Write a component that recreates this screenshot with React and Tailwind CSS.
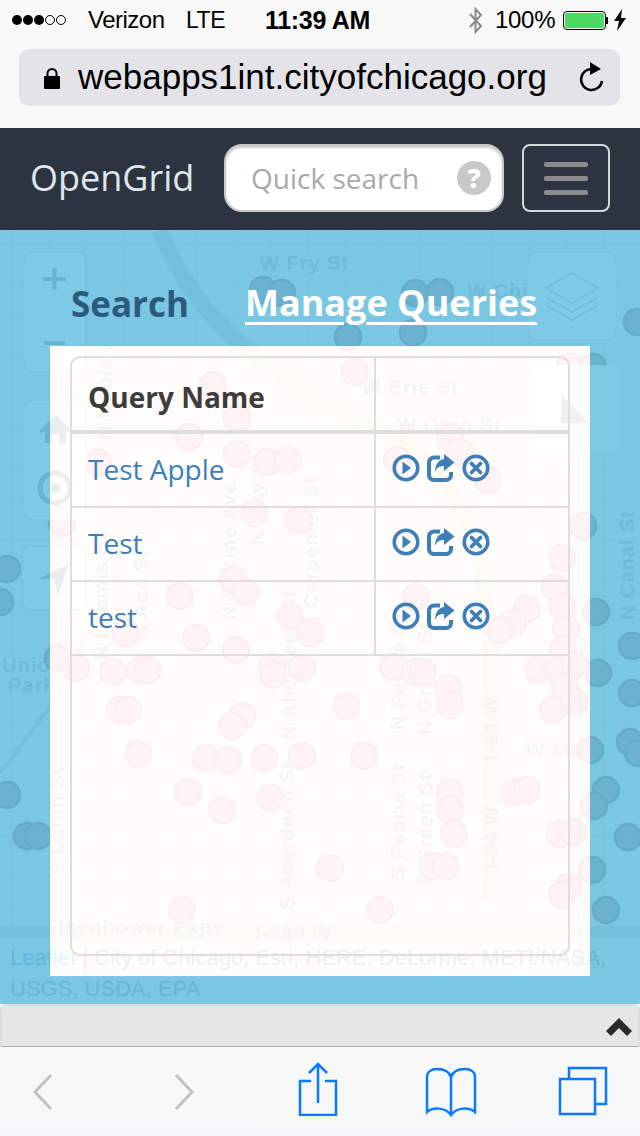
import React from 'react'

const dots = [
  [213, 385], [237, 418], [189, 437], [237, 454], [267, 462], [288, 460], [98, 463], [263, 290], [282, 293],
  [254, 513], [298, 520], [62, 523], [233, 579], [246, 592], [180, 596], [290, 616], [310, 633], [126, 633],
  [196, 638], [236, 650], [58, 658], [76, 668], [113, 672], [140, 670], [148, 670], [272, 667], [273, 675],
  [302, 668], [120, 710], [128, 710], [242, 716], [232, 726], [138, 754], [206, 758], [228, 760], [264, 758],
  [302, 756], [188, 792], [270, 798], [222, 810], [182, 910], [7, 569], [0, 602], [7, 795], [27, 836], [38, 836],
  [355, 372], [450, 437], [460, 452], [397, 460], [348, 337], [413, 333], [415, 293], [440, 292], [570, 367],
  [593, 367], [637, 322], [488, 480], [583, 526], [562, 558], [555, 587], [562, 607], [416, 597], [527, 609],
  [513, 623], [500, 630], [566, 629], [563, 650], [596, 612], [632, 646], [393, 667], [415, 672], [423, 672],
  [538, 670], [557, 670], [575, 665], [598, 673], [565, 687], [448, 688], [450, 705], [346, 706], [553, 710],
  [574, 702], [632, 693], [364, 756], [590, 750], [630, 742], [450, 792], [450, 810], [454, 834], [513, 792],
  [527, 790], [606, 790], [594, 806], [560, 834], [573, 832], [628, 837], [330, 868], [433, 866], [446, 866],
  [592, 870], [568, 887], [562, 895], [380, 910], [606, 910], [638, 753],
]

// each street name is only drawn in the layer it mostly shows in
const blueFlat = [['W Fry St', 260, 270], ['W Chicago', 467, 298], ['Union', 2, 672], ['Park', 8, 692]]
const blueTall = [['N Canal St', 634, 620]]

const paleFlat = [
  ['W Erie St', 362, 394], ['W Ohio St', 397, 432], ['W Monroe St', 526, 756], ['W Adams', 548, 836],
  ['Eisenhower Expy', 44, 934], ['I-290 W', 255, 940],
]

const paleTall = [
  ['N Noble St', 112, 440], ['N Loomis St', 108, 660], ['N Ada St', 148, 640], ['N Racine Ave', 236, 620],
  ['N May St', 264, 545], ['N Carpenter St', 318, 630], ['N Aberdeen St', 296, 740], ['S Aberdeen St', 294, 910],
  ['N Peoria St', 405, 730], ['N Green St', 432, 735], ['S Peoria St', 405, 880], ['S Green St', 432, 885],
  ['I-90 W', 498, 760], ['I-94 W', 498, 870], ['S Laflin St', 64, 875],
]

// the same map is drawn twice: tinted blue behind the page, washed out inside the panel
function MapLayer({ c, flat, tall, className, children }) {
  const vLines = Array.from({ length: 18 }, (_, i) => 12 + i * 37)
  const hLines = Array.from({ length: 21 }, (_, i) => 244 + i * 37)
  return (
    <svg className={className} width="640" height="774" viewBox="0 230 640 774" fontFamily="'Liberation Sans', sans-serif">
      {vLines.map(x => <line key={x} x1={x} y1="230" x2={x} y2="940" stroke={c.line} strokeWidth="1.5" />)}
      {hLines.map(y => <line key={y} x1="0" y1={y} x2="640" y2={y} stroke={c.line} strokeWidth="1.5" />)}
      <path d="M160 230 C190 310 260 380 400 440 C450 470 485 540 490 640 L490 900" fill="none" stroke={c.road} strokeWidth="16" />
      <path d="M163 490 L50 707 L0 773" fill="none" stroke={c.road} strokeWidth="4" />
      <path d="M0 932 L640 932" fill="none" stroke={c.road} strokeWidth="12" />
      {flat.map(([t, x, y]) => (
        <text key={t} x={x} y={y} fontSize="20" fontWeight="700" letterSpacing="1" fill={c.label}>{t}</text>
      ))}
      {tall.map(([t, x, y]) => (
        <text key={t} x={x} y={y} fontSize="20" fontWeight="700" letterSpacing="1" fill={c.label} transform={`rotate(-90 ${x} ${y})`}>{t}</text>
      ))}
      {dots.map(([x, y], i) => (
        <circle key={i} cx={x} cy={y} r="13" fill={c.dot} stroke={c.dotRing} strokeWidth="2.5" />
      ))}
      <rect x="24" y="252" width="62" height="120" rx="8" fill={c.box} stroke={c.boxLine} strokeWidth="2" />
      <rect x="24" y="400" width="62" height="120" rx="8" fill={c.box} stroke={c.boxLine} strokeWidth="2" />
      <rect x="22" y="546" width="64" height="64" rx="8" fill={c.box} stroke={c.boxLine} strokeWidth="2" />
      <rect x="528" y="252" width="88" height="88" rx="8" fill={c.box} stroke={c.boxLine} strokeWidth="2" />
      <rect x="532" y="365" width="88" height="87" rx="8" fill={c.box} />
      <path d="M43 279 H66 M54.500 268 V290 M44 343 H65" stroke={c.icon} strokeWidth="4" />
      <path d="M39 431 L56 415 L72 431 L69 433 L66 431 V443 H59 V434 H52 V443 H45 V431 L42 433 Z" fill={c.icon} />
      <circle cx="55" cy="488" r="15" fill="none" stroke={c.icon} strokeWidth="5" />
      <circle cx="55" cy="488" r="5" fill={c.icon} />
      <path d="M38 579 L69 564 L58 596 L54 579 Z" fill={c.icon} />
      <path d="M572 273 L598 288 L572 303 L546 288 Z M546 297 L572 312 L598 297 M546 305 L572 320 L598 305" fill="none" stroke={c.layers} strokeWidth="2" />
      <path d="M561 394 L589 423 H561 Z" fill={c.ruler} />
      <text x="10" y="965" fontSize="22" fill={c.credit}>
        <tspan fill={c.creditLink}>Leaflet</tspan> | City of Chicago, Esri, HERE, DeLorme, METI/NASA,
      </text>
      {children}
    </svg>
  )
}

const blueMap = {
  line: '#77c4df', road: '#74bfdb', label: '#70bcd8', dot: '#6bb2d1', dotRing: '#66acca',
  box: '#7ccae5', boxLine: '#75c3de', icon: '#68b5d1', layers: '#72bedA', ruler: '#79c7e2',
  credit: '#6ab6d3', creditLink: '#66b6da',
}

const paleMap = {
  line: '#fdfcf9', road: '#fdf9f5', label: '#f6f5f3', dot: '#fff3f4', dotRing: '#fdeef0',
  box: '#ffffff', boxLine: '#f9f9f8', icon: '#ebeeef', layers: '#ebeeef', ruler: '#f1f1f1',
  credit: '#eff0f1', creditLink: '#e6f3fb',
}

function PlayIcon() {
  return (
    <svg width="28" height="28" viewBox="0 0 28 28">
      <circle cx="14" cy="14" r="11.800" fill="none" stroke="#3f7fb9" strokeWidth="3.500" />
      <path d="M10.500 7.500 L19 14 L10.500 20.500 Z" fill="#3f7fb9" />
    </svg>
  )
}

function ShareIcon() {
  return (
    <svg width="28" height="28" viewBox="0 0 28 28">
      <path d="M13 3.500 H7 a5 5 0 0 0 -5 5 V21 a5 5 0 0 0 5 5 H19 a5 5 0 0 0 5 -5 V18" fill="none" stroke="#3f7fb9" strokeWidth="4" />
      <path d="M17 0 L27.500 8.500 L17 17 V12 C12 12 9.500 14 8 18 C8 11 11 6 17 5 Z" fill="#3f7fb9" />
    </svg>
  )
}

function CloseIcon() {
  return (
    <svg width="28" height="28" viewBox="0 0 28 28">
      <circle cx="14" cy="14" r="11.800" fill="none" stroke="#3f7fb9" strokeWidth="3.500" />
      <path d="M9.500 9.500 L18.500 18.500 M18.500 9.500 L9.500 18.500" stroke="#3f7fb9" strokeWidth="3.800" strokeLinecap="round" />
    </svg>
  )
}

function QueryRow({ name }) {
  return (
    <tr className="h-[74px]">
      <td className="border-b-2 border-r-2 border-[#dfdedc] pl-4 pb-[2px] text-[28px] text-[#3f7fb9] align-middle">{name}</td>
      <td className="border-b-2 border-[#dfdedc] pl-[16px] align-middle">
        <div className="flex items-center gap-[7px] pb-[5px]">
          <PlayIcon />
          <ShareIcon />
          <CloseIcon />
        </div>
      </td>
    </tr>
  )
}

function StatusBar() {
  return (
    <div className="flex items-center h-[40px] pl-[12px] text-black font-['Liberation_Sans',sans-serif] text-[24px] leading-none">
      <div className="flex items-center gap-[1px] w-[54px]">
        <span className="w-[10px] h-[10px] rounded-full bg-black" />
        <span className="w-[10px] h-[10px] rounded-full bg-black" />
        <span className="w-[10px] h-[10px] rounded-full bg-black" />
        <span className="w-[10px] h-[10px] rounded-full border border-black" />
        <span className="w-[10px] h-[10px] rounded-full border border-black" />
      </div>
      <span className="ml-[22px] w-[98px] tracking-[-0.5px]">Verizon</span>
      <span className="w-[79px] text-[23px] tracking-[-0.5px]">LTE</span>
      <span className="w-[205px] font-bold text-[25px] tracking-[-0.3px]">11:39 AM</span>
      <svg className="mr-[12px] -ml-[2px]" width="15" height="27" viewBox="0 0 15 27">
        <path d="M2 7 L13 19 L7.500 25 V2 L13 8 L2 20" fill="none" stroke="#8a8a8a" strokeWidth="2" />
      </svg>
      <span className="w-[68px] tracking-[-0.3px]">100%</span>
      <div className="flex items-center">
        <div className="w-[43px] h-[19px] rounded-[4px] border border-black p-[1px]">
          <div className="w-full h-full rounded-[2px] bg-[#4cd964]" />
        </div>
        <span className="w-[2px] h-[7px] bg-black" />
      </div>
      <svg className="ml-[5px]" width="14" height="22" viewBox="0 0 14 22">
        <path d="M9 0 L1 12 H6 L4 22 L13 9 H8 Z" fill="#000" />
      </svg>
    </div>
  )
}

function UrlBar() {
  return (
    <div className="mx-[19px] mt-[9px] w-[601px] h-[57px] rounded-[10px] bg-[#e4e4e8] flex items-center pl-[24px] font-['Liberation_Sans',sans-serif]">
      <svg width="18" height="22" viewBox="0 0 18 22">
        <path d="M4.500 10 V6.500 a4.500 4.500 0 0 1 9 0 V10" fill="none" stroke="#000" strokeWidth="2" />
        <rect x="1" y="9" width="16" height="13" rx="1" fill="#000" />
      </svg>
      <span className="ml-[17px] text-[35px] leading-none text-black whitespace-nowrap pb-[2px]">webapps1int.cityofchicago.org</span>
      <svg className="ml-[30px]" width="28" height="32" viewBox="0 0 28 32">
        <path d="M15 7 A10.500 10.500 0 1 0 25 19" fill="none" stroke="#000" strokeWidth="2.500" />
        <path d="M13 0 L24 7 L13 13 Z" fill="#000" />
      </svg>
    </div>
  )
}

function Navbar() {
  return (
    <nav className="flex items-center h-[102px] pb-[2px] bg-[#2c3440] font-['Open_Sans',sans-serif]">
      <span className="ml-[30px] w-[194px] text-[36px] text-[#dfe6ec] leading-none">OpenGrid</span>
      <div className="relative flex items-center w-[280px] h-[68px] rounded-[18px] bg-white border-2 border-[#c9c9c9] pl-[25px] shadow-[inset_0_2px_2px_rgba(0,0,0,0.2)]">
        <span className="text-[28px] text-[#a9a9a9] leading-none">Quick search</span>
        <span className="absolute right-[11px] top-[15px] w-[34px] h-[34px] rounded-full bg-[#c8c8c8] text-white text-[26px] font-extrabold leading-[34px] text-center">?</span>
      </div>
      <div className="ml-[18px] w-[88px] h-[68px] rounded-[8px] border-2 border-[#d5d7da] flex flex-col items-center justify-center gap-[9px]">
        <span className="w-[44px] h-[5px] rounded-[2px] bg-[#8b8b8b]" />
        <span className="w-[44px] h-[5px] rounded-[2px] bg-[#8b8b8b]" />
        <span className="w-[44px] h-[5px] rounded-[2px] bg-[#8b8b8b]" />
      </div>
    </nav>
  )
}

function Toolbar() {
  return (
    <div className="flex items-start h-[89px] bg-gradient-to-b from-[#f8f8f8] to-[#f6f7f8] pl-[32px]">
      <svg className="mt-[26px]" width="22" height="38" viewBox="0 0 22 38">
        <path d="M19 2 L3 19 L19 36" fill="none" stroke="#c2c2c2" strokeWidth="3" />
      </svg>
      <svg className="mt-[26px] ml-[119px]" width="22" height="38" viewBox="0 0 22 38">
        <path d="M3 2 L19 19 L3 36" fill="none" stroke="#c2c2c2" strokeWidth="3" />
      </svg>
      <svg className="mt-[15px] ml-[103px]" width="40" height="54" viewBox="0 0 40 54">
        <path d="M13 19 H2 V53 H38 V19 H27 M20 41 V2 M11 11 L20 2 L29 11" fill="none" stroke="#0a7aff" strokeWidth="2.500" />
      </svg>
      <svg className="mt-[20px] ml-[87px]" width="52" height="50" viewBox="0 0 52 50">
        <path d="M26 10 C24 4 18 2 12 2 C6 2 2 5 2 10 V45 C8 40 20 40 26 48 C32 40 44 40 50 45 V10 C50 5 46 2 40 2 C34 2 28 4 26 10 V48" fill="none" stroke="#0a7aff" strokeWidth="2.500" />
      </svg>
      <svg className="mt-[19px] ml-[81px]" width="50" height="50" viewBox="0 0 50 50">
        <path d="M11 13 V2 H48 V38 H37" fill="none" stroke="#0a7aff" strokeWidth="2.500" />
        <rect x="2" y="13" width="35" height="35" fill="none" stroke="#0a7aff" strokeWidth="2.500" />
      </svg>
    </div>
  )
}

export default function App() {
  return (
    <div className="w-[640px] h-[1136px] flex flex-col overflow-hidden bg-[#f8f8f8]">
      <header className="h-[128px] bg-[#f8f8f8]">
        <StatusBar />
        <UrlBar />
      </header>
      <Navbar />

      <main className="relative h-[774px] overflow-hidden bg-[#79c7e2] font-['Open_Sans',sans-serif]">
        <MapLayer c={blueMap} flat={blueFlat} tall={blueTall} className="absolute left-0 top-0">
          <text x="10" y="996" fontSize="22" fill={blueMap.credit}>USGS, USDA, EPA</text>
        </MapLayer>
        <div className="relative flex items-center gap-[56px] h-[116px] pl-[71px] pt-[30px] leading-none">
          <span className="text-[35px] font-bold text-[#2d5a7c]">Search</span>
          <span className="text-[36px] font-bold text-white underline underline-offset-[6px] decoration-[3px]">Manage Queries</span>
        </div>
        <section className="relative mx-[50px] w-[540px] h-[630px] bg-[#fefdfb] overflow-hidden pt-[10px] px-[20px] pb-[20px]">
          <MapLayer c={paleMap} flat={paleFlat} tall={paleTall} className="absolute left-[-50px] top-[-116px]" />
          <div className="relative h-[600px] w-[500px] rounded-[10px] border-2 border-[#dfdedc]">
            <table className="w-full border-separate border-spacing-0 table-fixed">
              <thead>
                <tr className="h-[76px]">
                  <th className="w-[304px] border-b-4 border-r-2 border-[#dfdedc] pl-4 pt-[6px] text-left text-[28px] font-bold text-[#3d3c3a]">Query Name</th>
                  <th className="border-b-4 border-[#dfdedc]" />
                </tr>
              </thead>
              <tbody>
                <QueryRow name="Test Apple" />
                <QueryRow name="Test" />
                <QueryRow name="test" />
              </tbody>
            </table>
          </div>
        </section>
      </main>

      <div className="relative h-[43px] shrink-0 rounded-t-[6px] bg-[#e6e6e6] border-2 border-b-0 border-[#dcdcdc] shadow-[inset_0_-1px_0_#a8a8a8] flex items-center justify-end pr-[6px]">
        <svg width="26" height="18" viewBox="0 0 26 18">
          <path d="M0 13 L13 0 L26 13 L21 18 L13 10 L5 18 Z" fill="#2b2b2b" />
        </svg>
      </div>
      <Toolbar />
    </div>
  )
}
